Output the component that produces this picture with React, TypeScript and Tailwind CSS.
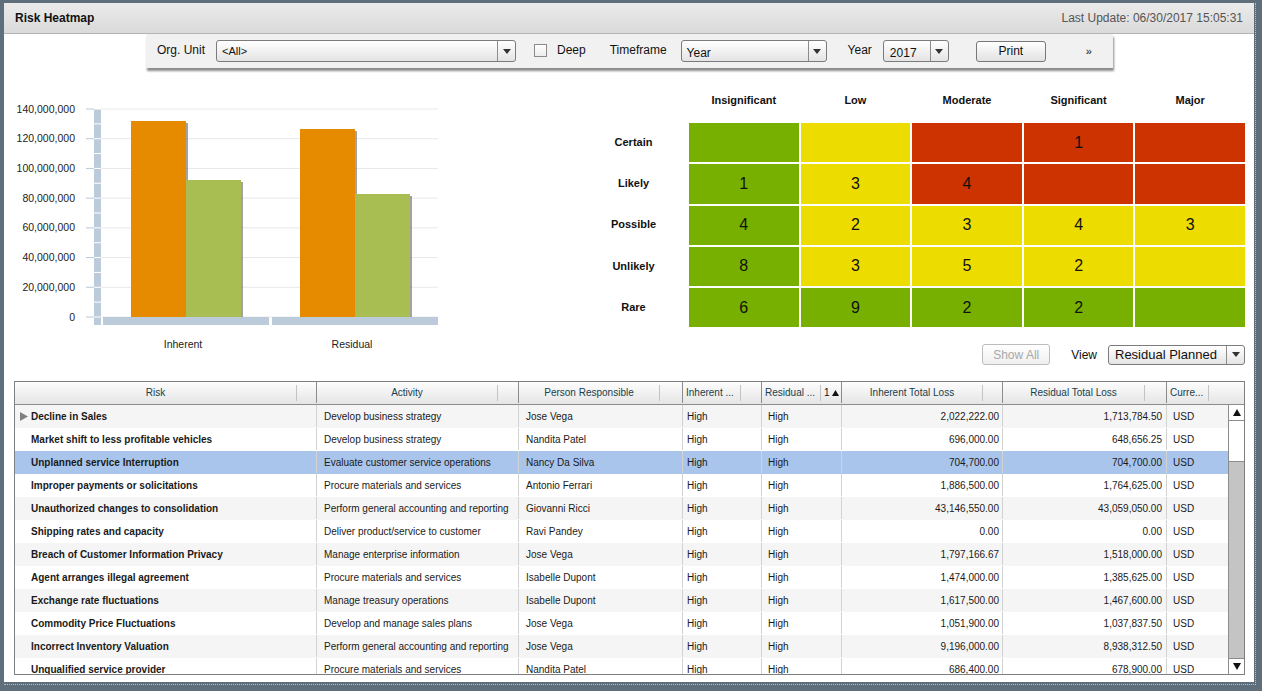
import React from "react";

type Row = [string, string, string, string, string];

const rows: Row[] = [
  ["Decline in Sales", "Develop business strategy", "Jose Vega", "2,022,222.00", "1,713,784.50"],
  ["Market shift to less profitable vehicles", "Develop business strategy", "Nandita Patel", "696,000.00", "648,656.25"],
  ["Unplanned service Interruption", "Evaluate customer service operations", "Nancy Da Silva", "704,700.00", "704,700.00"],
  ["Improper payments or solicitations", "Procure materials and services", "Antonio Ferrari", "1,886,500.00", "1,764,625.00"],
  ["Unauthorized changes to consolidation", "Perform general accounting and reporting", "Giovanni Ricci", "43,146,550.00", "43,059,050.00"],
  ["Shipping rates and capacity", "Deliver product/service to customer", "Ravi Pandey", "0.00", "0.00"],
  ["Breach of Customer Information Privacy", "Manage enterprise information", "Jose Vega", "1,797,166.67", "1,518,000.00"],
  ["Agent arranges illegal agreement", "Procure materials and services", "Isabelle Dupont", "1,474,000.00", "1,385,625.00"],
  ["Exchange rate fluctuations", "Manage treasury operations", "Isabelle Dupont", "1,617,500.00", "1,467,600.00"],
  ["Commodity Price Fluctuations", "Develop and manage sales plans", "Jose Vega", "1,051,900.00", "1,037,837.50"],
  ["Incorrect Inventory Valuation", "Perform general accounting and reporting", "Jose Vega", "9,196,000.00", "8,938,312.50"],
  ["Unqualified service provider", "Procure materials and services", "Nandita Patel", "686,400.00", "678,900.00"],
];

const G = "bg-[#77b000]";
const Y = "bg-[#eddc00]";
const R = "bg-[#cc3300]";

const impacts = ["Insignificant", "Low", "Moderate", "Significant", "Major"];
const heat: { label: string; cells: [string, string][] }[] = [
  { label: "Certain", cells: [[G, ""], [Y, ""], [R, ""], [R, "1"], [R, ""]] },
  { label: "Likely", cells: [[G, "1"], [Y, "3"], [R, "4"], [R, ""], [R, ""]] },
  { label: "Possible", cells: [[G, "4"], [Y, "2"], [Y, "3"], [Y, "4"], [Y, "3"]] },
  { label: "Unlikely", cells: [[G, "8"], [Y, "3"], [Y, "5"], [Y, "2"], [Y, ""]] },
  { label: "Rare", cells: [[G, "6"], [G, "9"], [G, "2"], [G, "2"], [G, ""]] },
];

function DropArrow() {
  return (
    <svg width="8" height="5" viewBox="0 0 8 5">
      <path d="M0 0h8L4 5z" fill="#333" />
    </svg>
  );
}

function Select({ value, className, textClass }: { value: string; className: string; textClass: string }) {
  return (
    <div className={`flex rounded-[3px] border border-[#7b7b7b] bg-linear-to-b from-white to-[#e4e4e4] ${className}`}>
      <div className={`flex flex-1 items-center overflow-hidden whitespace-nowrap pl-[5px] text-[#111] ${textClass}`}>{value}</div>
      <div className="flex w-[18px] items-center justify-center border-l border-[#8c8c8c]">
        <DropArrow />
      </div>
    </div>
  );
}

function Chart() {
  const ys = [0, 1, 2, 3, 4, 5, 6, 7].map((i) => 249 - i * (208 / 7));
  const labels = ["0", "20,000,000", "40,000,000", "60,000,000", "80,000,000", "100,000,000", "120,000,000", "140,000,000"];
  const segs = Array.from({ length: 15 }, (_, i) => 41 + i * (208 / 14));
  const bars = [
    { x: 127, top: 53, fill: "#e68a00" },
    { x: 182, top: 112, fill: "#a8be52" },
    { x: 296, top: 61, fill: "#e68a00" },
    { x: 351, top: 126, fill: "#a8be52" },
  ];
  return (
    <svg width="576" height="313" viewBox="0 0 576 313" className="shrink-0">
      {ys.map((y, i) => (
        <g key={i}>
          <line x1="97" x2="434" y1={y} y2={y} stroke="#e8e8e8" strokeWidth="1" />
          <line x1="82" x2="90" y1={y} y2={y} stroke="#b9c9d8" strokeWidth="1" />
          <text x="71" y={y + 3.5} textAnchor="end" fontSize="10.5" fill="#222" fontFamily="Liberation Sans, Arial, sans-serif">
            {labels[i]}
          </text>
        </g>
      ))}
      <rect x="90" y="41" width="7" height="216" fill="#bccbda" />
      {segs.map((y, i) => (
        <line key={i} x1="90" x2="97" y1={y} y2={y} stroke="#fff" strokeWidth="1" />
      ))}
      <rect x="99" y="249" width="166" height="8" fill="#bccbda" />
      <rect x="268" y="249" width="166" height="8" fill="#bccbda" />
      {bars.map((b, i) => (
        <g key={i}>
          <rect x={b.x + 2} y={b.top + 2} width="55" height={249 - b.top - 2} fill="#555" opacity="0.55" />
          <rect x={b.x} y={b.top} width="55" height={249 - b.top} fill={b.fill} />
        </g>
      ))}
      <text x="179" y="280" textAnchor="middle" fontSize="10.5" fill="#222" fontFamily="Liberation Sans, Arial, sans-serif">
        Inherent
      </text>
      <text x="348" y="280" textAnchor="middle" fontSize="10.5" fill="#222" fontFamily="Liberation Sans, Arial, sans-serif">
        Residual
      </text>
    </svg>
  );
}

function Heatmap() {
  return (
    <div className="flex w-[665px] shrink-0 flex-col pt-[24px]">
      <div className="grid h-[16px] grid-cols-[107px_repeat(5,minmax(0,1fr))] items-center gap-x-[2px]">
        <div />
        {impacts.map((h) => (
          <div key={h} className="text-center text-[11px] font-bold text-[#111]">
            {h}
          </div>
        ))}
      </div>
      <div className="mt-[15px] grid grid-cols-[107px_repeat(5,minmax(0,1fr))] gap-[2px]">
        {heat.map((r) => (
          <React.Fragment key={r.label}>
            <div className="flex h-[39.25px] items-center justify-center pb-[1px] text-[11px] font-bold text-[#111]">{r.label}</div>
            {r.cells.map(([c, v], i) => (
              <div key={i} className={`flex h-[39.25px] items-center justify-center text-[16px] text-[#111] ${c}`}>
                {v}
              </div>
            ))}
          </React.Fragment>
        ))}
      </div>
      <div className="mt-[17px] flex items-center justify-end">
        <div className="flex h-[21px] w-[68px] items-center justify-center rounded-[3px] border border-[#bcbcbc] bg-linear-to-b from-white to-[#efefef] text-[12px] text-[#a8a8a8]">
          Show All
        </div>
        <div className="ml-[21px] text-[12px] text-[#111]">View</div>
        <Select value="Residual Planned" className="ml-[11px] h-[20px] w-[137px]" textClass="text-[13px] pl-[6px]" />
      </div>
    </div>
  );
}

function HeaderCell({ w, text, trail, left, extra }: { w: string; text: string; trail: string; left?: boolean; extra?: React.ReactNode }) {
  return (
    <div className={`flex h-full shrink-0 items-center border-r border-[#8c8c8c] ${w}`}>
      <div className={`flex-1 overflow-hidden whitespace-nowrap ${left ? "pl-[3px] text-left" : "text-center"}`}>{text}</div>
      <div className="h-[16px] w-px bg-[#c4c4c4]" />
      <div className={`flex h-full items-center pl-[3px] ${trail}`}>{extra}</div>
    </div>
  );
}

function Table() {
  return (
    <div className="ml-[10px] mt-0 flex h-[294px] w-[1231px] flex-col border border-[#7f7f7f] text-[10px]">
      <div className="flex h-[23px] shrink-0 border-b border-[#8c8c8c] bg-linear-to-b from-[#fdfdfd] to-[#e5e5e5] pb-[1px] text-[#17404d]">
        <HeaderCell w="w-[302px]" text="Risk" trail="w-[19px]" />
        <HeaderCell w="w-[202px]" text="Activity" trail="w-[20px]" />
        <HeaderCell w="w-[164px]" text="Person Responsible" trail="w-[22px]" />
        <HeaderCell w="w-[79px]" text="Inherent ..." trail="w-[20px]" left />
        <HeaderCell
          w="w-[80px]"
          text="Residual ..."
          trail="w-[20px]"
          left
          extra={
            <span className="flex items-center gap-[2px] text-[#111]">
              1
              <svg width="7" height="6" viewBox="0 0 7 6">
                <path d="M3.5 0L7 6H0z" fill="#111" />
              </svg>
            </span>
          }
        />
        <HeaderCell w="w-[161px]" text="Inherent Total Loss" trail="w-[19px]" />
        <HeaderCell w="w-[164px]" text="Residual Total Loss" trail="w-[21px]" />
        <div className="flex h-full flex-1 items-center">
          <div className="flex-1 overflow-hidden whitespace-nowrap pl-[3px]">Curre...</div>
          <div className="h-[16px] w-px bg-[#c4c4c4]" />
          <div className="w-[35px]" />
        </div>
      </div>
      <div className="flex min-h-0 flex-1">
        <div className="flex-1 overflow-hidden text-[#1a1a1a]">
          {rows.map((r, i) => {
            const bg = i === 2 ? "bg-[#a9c5ec]" : i % 2 === 0 ? "bg-[#f5f5f5]" : "bg-white";
            return (
              <div key={i} className={`flex h-[23px] pb-[1px] ${bg}`}>
                <div className="flex w-[302px] shrink-0 items-center overflow-hidden whitespace-nowrap border-r border-[#d2d2d2] font-bold">
                  <div className="flex w-[16px] shrink-0 items-center justify-center pl-[1px]">
                    {i === 0 && (
                      <svg width="8" height="9" viewBox="0 0 8 9">
                        <path d="M0 0L8 4.5L0 9z" fill="#808080" />
                      </svg>
                    )}
                  </div>
                  {r[0]}
                </div>
                <div className="flex w-[202px] shrink-0 items-center overflow-hidden whitespace-nowrap border-r border-[#d2d2d2] pl-[7px]">{r[1]}</div>
                <div className="flex w-[164px] shrink-0 items-center overflow-hidden whitespace-nowrap border-r border-[#d2d2d2] pl-[7px]">{r[2]}</div>
                <div className="flex w-[79px] shrink-0 items-center border-r border-[#d2d2d2] pl-[4px]">High</div>
                <div className="flex w-[80px] shrink-0 items-center border-r border-[#d2d2d2] pl-[6px]">High</div>
                <div className="flex w-[161px] shrink-0 items-center justify-end border-r border-[#d2d2d2] pr-[3px]">{r[3]}</div>
                <div className="flex w-[164px] shrink-0 items-center justify-end border-r border-[#d2d2d2] pr-[4px]">{r[4]}</div>
                <div className="flex flex-1 items-center pl-[6px]">USD</div>
              </div>
            );
          })}
        </div>
        <div className="flex w-[16px] shrink-0 flex-col border-l border-[#8c8c8c] bg-[#c4c4c4]">
          <div className="flex h-[16px] items-center justify-center border-b border-[#8c8c8c] bg-white">
            <svg width="8" height="7" viewBox="0 0 8 7">
              <path d="M4 0L8 7H0z" fill="#111" />
            </svg>
          </div>
          <div className="h-[41px] border-b border-[#8c8c8c] bg-white" />
          <div className="flex-1" />
          <div className="flex h-[16px] items-center justify-center border-t border-[#8c8c8c] bg-white">
            <svg width="8" height="7" viewBox="0 0 8 7">
              <path d="M0 0H8L4 7z" fill="#111" />
            </svg>
          </div>
        </div>
      </div>
    </div>
  );
}

export default function App() {
  return (
    <div className="h-[691px] w-[1262px] overflow-hidden bg-[#5e6e7b] pb-[6px] pl-[4px] pr-[6px] pt-[3px] font-['Liberation_Sans',Arial,sans-serif]">
      <div className="border-b border-r border-dotted border-[#b4c0ca] pb-[2px] pr-[1px]">
        <div className="flex h-[679px] w-[1250px] flex-col bg-white">
          {/* title bar */}
          <div className="flex h-[31px] shrink-0 items-center justify-between border-b border-[#b4b4b4] bg-linear-to-b from-[#ebebeb] to-[#dadada] px-[11px]">
            <span className="text-[12px] font-bold text-[#111]">Risk Heatmap</span>
            <span className="text-[12px] text-[#555]">Last Update: 06/30/2017 15:05:31</span>
          </div>

          {/* toolbar */}
          <div className="ml-[142px] flex h-[34px] w-[967px] shrink-0 items-center bg-[#f1f1f1] text-[12px] text-[#111] shadow-[1px_3px_2px_rgba(0,0,0,0.45)]">
            <span className="ml-[11px] -mt-[2px]">Org. Unit</span>
            <Select value="<All>" className="ml-[11px] h-[22px] w-[300px]" textClass="text-[11px]" />
            <div className="ml-[18px] -mt-[2px] h-[13px] w-[13px] border border-[#8a8a8a] bg-linear-to-b from-white to-[#ececec]" />
            <span className="ml-[10px] -mt-[2px]">Deep</span>
            <span className="ml-[24px] -mt-[2px]">Timeframe</span>
            <Select value="Year" className="ml-[14px] h-[22px] w-[146px]" textClass="text-[12px] pt-[3px]" />
            <span className="ml-[21px] -mt-[2px]">Year</span>
            <Select value="2017" className="ml-[11px] h-[22px] w-[66px]" textClass="text-[12px] pt-[3px] pl-[6px]" />
            <div className="ml-[27px] flex h-[21px] w-[70px] items-center justify-center rounded-[3px] border border-[#777] bg-linear-to-b from-white to-[#e2e2e2]">
              Print
            </div>
            <span className="ml-[40px] text-[11px]">»</span>
          </div>

          {/* chart + heatmap */}
          <div className="flex h-[313px] shrink-0">
            <Chart />
            <Heatmap />
          </div>

          <Table />
        </div>
      </div>
    </div>
  );
}
